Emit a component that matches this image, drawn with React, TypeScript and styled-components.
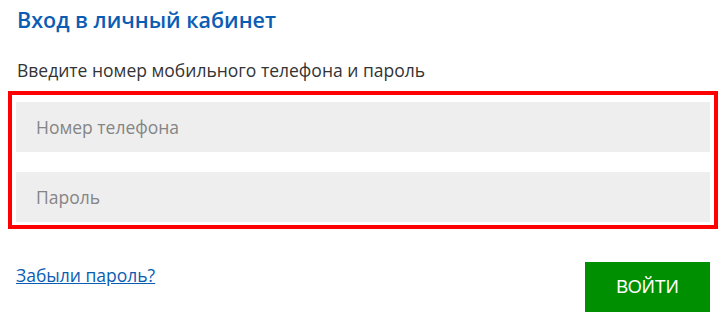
import React from 'react'
import styled, { createGlobalStyle } from 'styled-components'

const GlobalStyle = createGlobalStyle`
  body {
    margin: 0;
    background: #fff;
    font-family: "Open Sans", "Liberation Sans", sans-serif;
  }
`

const Page = styled.div`
  width: 722px;
  padding-top: 6px;
`

const Title = styled.h1`
  margin: 0 0 0 17px;
  font-size: 21.5px;
  line-height: 28px;
  font-weight: 600;
  color: #0b5db3;
`

const Hint = styled.p`
  margin: 24px 0 0 17px;
  font-size: 17.5px;
  line-height: 24px;
  color: #333;
`

const FieldsBox = styled.div`
  margin: 9px 0 0 8px;
  width: 710px;
  box-sizing: border-box;
  border: 4px solid #ff0000;
  padding: 7px 4px 3px 4px;
  display: flex;
  flex-direction: column;
  gap: 20px;
`

const Input = styled.input`
  height: 50px;
  border: none;
  outline: none;
  background: #eeeeee;
  padding: 0 20px;
  font-family: "Open Sans", sans-serif;
  font-size: 17.5px;
  color: #333;

  &::placeholder {
    color: #858585;
  }
`

const Footer = styled.div`
  margin-top: 33px;
  padding: 0 12px 0 16px;
  display: flex;
  align-items: flex-start;
  justify-content: space-between;
`

const ForgotLink = styled.a`
  margin-top: 1px;
  font-size: 17.5px;
  line-height: 24px;
  color: #0b5db3;
  text-decoration: underline;
  cursor: pointer;
`

const SubmitButton = styled.button`
  width: 125px;
  height: 50px;
  border: none;
  background: #008f00;
  color: #fff;
  font-family: "Liberation Sans", Arial, sans-serif;
  font-size: 18px;
  cursor: pointer;
`

export default function App() {
  return (
    <Page>
      <GlobalStyle />
      <Title>Вход в личный кабинет</Title>
      <Hint>Введите номер мобильного телефона и пароль</Hint>
      <FieldsBox>
        <Input type="tel" placeholder="Номер телефона" />
        <Input type="password" placeholder="Пароль" />
      </FieldsBox>
      <Footer>
        <ForgotLink>Забыли пароль?</ForgotLink>
        <SubmitButton>ВОЙТИ</SubmitButton>
      </Footer>
    </Page>
  )
}
